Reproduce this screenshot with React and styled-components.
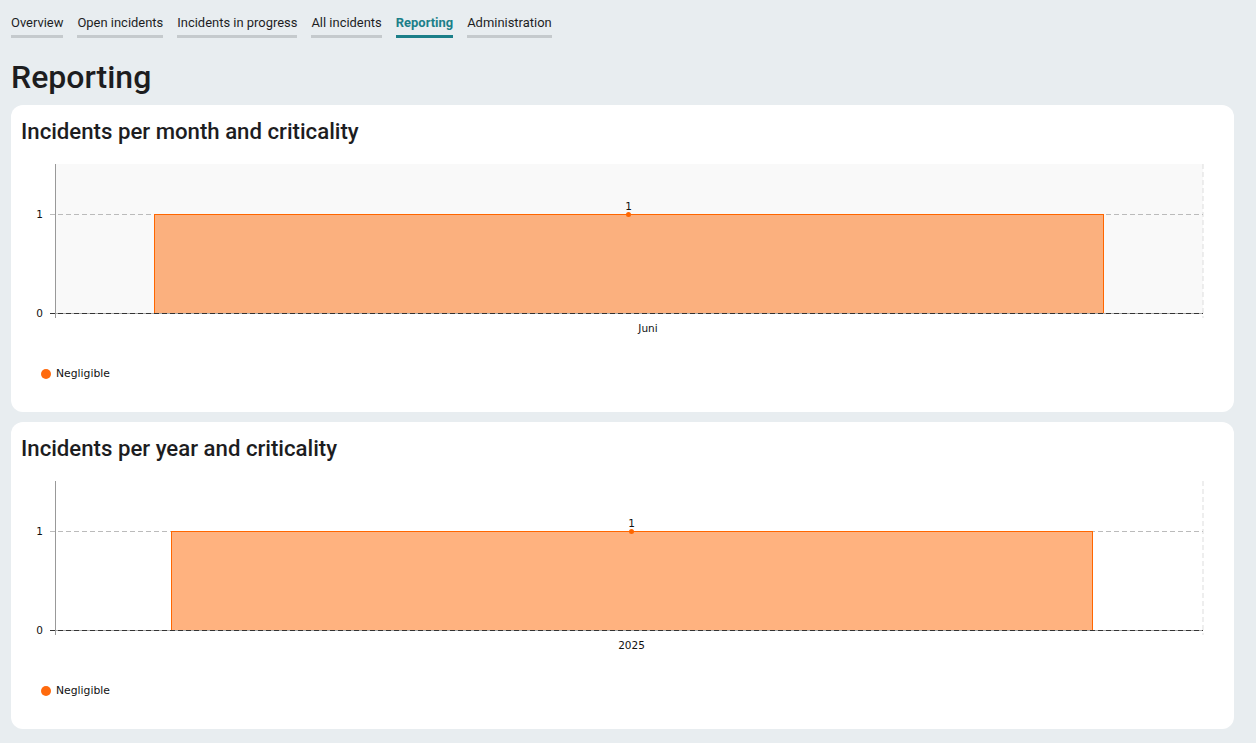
import React from "react";
import styled, { createGlobalStyle } from "styled-components";

const Global = createGlobalStyle`
  html, body { margin: 0; padding: 0; background: #e8edf0; }
  body { font-family: Roboto, "Liberation Sans", sans-serif; color: #1d1d1f; }
`;

const Page = styled.div`
  padding: 0 22px 14px 11px;
`;

const Nav = styled.nav`
  display: flex;
  gap: 14px;
  padding-top: 15px;
`;

const Tab = styled.a`
  font-size: 12.95px;
  line-height: 16px;
  padding-bottom: 4px;
  border-bottom: 3px solid ${(p) => (p.$active ? "#1b7f89" : "#c5cacd")};
  color: ${(p) => (p.$active ? "#1b7f89" : "#1d1d1f")};
  font-weight: ${(p) => (p.$active ? 700 : 400)};
  text-decoration: none;
  cursor: pointer;
`;

const Heading = styled.h1`
  margin: 19px 0 8px;
  font-size: 32px;
  line-height: 40px;
  font-weight: 500;
  color: #1d1d1f;
`;

const Cards = styled.div`
  display: flex;
  flex-direction: column;
  gap: 10px;
`;

const Card = styled.section`
  background: #fff;
  border-radius: 12px;
  padding: 13px 0 32px;
`;

const CardTitle = styled.h2`
  margin: 0 0 6px 10px;
  font-size: 22.2px;
  line-height: 26px;
  font-weight: 500;
  color: #1d1d1f;
`;

const ChartSvg = styled.svg`
  display: block;
`;

const Legend = styled.div`
  display: flex;
  align-items: center;
  gap: 5px;
  margin: 27px 0 0 30px;
  font-family: "DejaVu Sans", Verdana, sans-serif;
  font-size: 10.8px;
  color: #111;
`;

const Dot = styled.span`
  width: 10px;
  height: 10px;
  border-radius: 50%;
  background: #ff6a0d;
`;

const W = 1223;
const H = 190;
const L = 44;
const R = 1192;
const TOP = 14;
const ONE = 64;
const ZERO = 163;

function BarChart({ plotBg, x1, x2, label, labelX, fill }) {
  const cx = (x1 + x2) / 2;
  return (
    <ChartSvg width={W} height={H} viewBox={`0 0 ${W} ${H}`}>
      {plotBg && <rect x={L} y={TOP} width={R - L} height={ZERO - TOP} fill={plotBg} />}
      <line x1={R} y1={TOP} x2={R} y2={ZERO + 5} stroke="#ddd" strokeDasharray="5 3" />
      <line x1={L - 5} y1={ONE + 0.5} x2={R} y2={ONE + 0.5} stroke="#bbb" strokeDasharray="5 3" />
      <rect x={x1 + 0.5} y={ONE + 0.5} width={x2 - x1} height={ZERO - ONE} fill={fill} stroke="#ff6600" strokeWidth="1" />
      <line x1={L - 5} y1={ZERO + 0.5} x2={R} y2={ZERO + 0.5} stroke="#aaa" />
      <line x1={L - 5} y1={ZERO + 0.5} x2={R} y2={ZERO + 0.5} stroke="#333" strokeDasharray="5 3" />
      <line x1={L + 0.5} y1={TOP} x2={L + 0.5} y2={ZERO + 5} stroke="#999" />
      <g fontFamily="'DejaVu Sans', Verdana, sans-serif" fontSize="10.5" fill="#111">
        <text x={L - 12} y={ONE + 4} textAnchor="end">1</text>
        <text x={L - 12} y={ZERO + 4} textAnchor="end">0</text>
        <text x={labelX ?? cx} y={ZERO + 19} textAnchor="middle">{label}</text>
        <text x={cx} y={ONE - 4} textAnchor="middle">1</text>
      </g>
      <circle cx={cx} cy={ONE + 0.5} r="2.5" fill="#ff6600" />
    </ChartSvg>
  );
}

function ChartCard({ title, plotBg, x1, x2, label, labelX, fill }) {
  return (
    <Card>
      <CardTitle>{title}</CardTitle>
      <BarChart plotBg={plotBg} x1={x1} x2={x2} label={label} labelX={labelX} fill={fill} />
      <Legend>
        <Dot />
        Negligible
      </Legend>
    </Card>
  );
}

const tabs = ["Overview", "Open incidents", "Incidents in progress", "All incidents", "Reporting", "Administration"];

export default function App() {
  return (
    <Page>
      <Global />
      <Nav>
        {tabs.map((t) => (
          <Tab key={t} $active={t === "Reporting"}>{t}</Tab>
        ))}
      </Nav>
      <Heading>Reporting</Heading>
      <Cards>
        <ChartCard title="Incidents per month and criticality" plotBg="#f9f9f9" x1={143} x2={1092} label="Juni" labelX={637} fill="#fbb07e" />
        <ChartCard title="Incidents per year and criticality" x1={160} x2={1081} label="2025" fill="#ffb27f" />
      </Cards>
    </Page>
  );
}
